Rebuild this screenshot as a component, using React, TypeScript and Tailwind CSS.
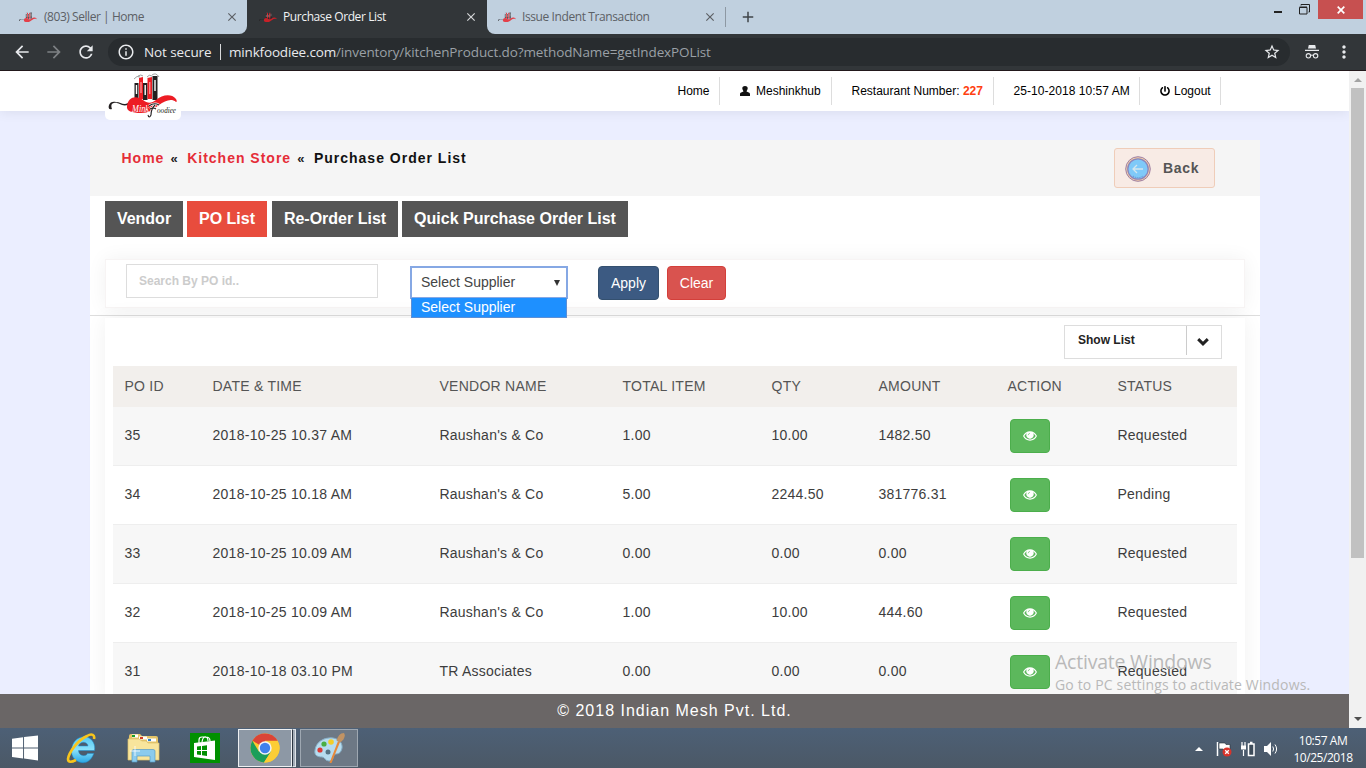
import React from 'react';
import {
  MdAdd,
  MdArrowBack,
  MdArrowForward,
  MdClose,
  MdInfoOutline,
  MdMoreVert,
  MdRefresh,
  MdStarBorder
} from 'react-icons/md';
import { FaPowerOff } from 'react-icons/fa';

const columns = ['PO ID', 'DATE & TIME', 'VENDOR NAME', 'TOTAL ITEM', 'QTY', 'AMOUNT', 'ACTION', 'STATUS'];

const orders = [
{ id: '35', date: '2018-10-25 10.37 AM', vendor: "Raushan's & Co", items: '1.00', qty: '10.00', amount: '1482.50', status: 'Requested' },
{ id: '34', date: '2018-10-25 10.18 AM', vendor: "Raushan's & Co", items: '5.00', qty: '2244.50', amount: '381776.31', status: 'Pending' },
{ id: '33', date: '2018-10-25 10.09 AM', vendor: "Raushan's & Co", items: '0.00', qty: '0.00', amount: '0.00', status: 'Requested' },
{ id: '32', date: '2018-10-25 10.09 AM', vendor: "Raushan's & Co", items: '1.00', qty: '10.00', amount: '444.60', status: 'Requested' },
{ id: '31', date: '2018-10-18 03.10 PM', vendor: 'TR Associates', items: '0.00', qty: '0.00', amount: '0.00', status: 'Requested' }];

const GRID = 'grid grid-cols-[88px_227px_183px_149px_107px_129px_110px_131px]';

function LogoArt() {
  return (
    <>
      <path d="M29.500 12h4v16h-4zM38 12h4.500v17H38zM47.500 5h5v24h-5z" fill="#231f20" />
      <path d="M34 7l4-1v22h-4zM42.500 7l4.500-1v22h-4.500z" fill="#ed1c24" />
      <path d="M31.500 14v9M40.200 14v10M50 9v11" stroke="#fff" strokeWidth="1.400" />
      <path d="M36 11v11M44.800 11v12" stroke="#fff" strokeWidth=".7" />
      <path d="M29 8q3-4 6-2M33 5q3-2 5 0M42 6q2-3 5-1M47 4q4-3 7 2" fill="none" stroke="#777" strokeWidth=".7" />
      <path d="M23 34c-7 2-9-3-14-2-3 .5-3 3-2 6-3 1-4-1-3-4 1-3 4-4 7-3 5 0 7 4 12 1z" fill="#231f20" />
      <path d="M22 35c1-9 9-11 16-6 5 4 9 3 13 0 6-5 15-7 20-1 1 2 1 3 0 3-5-4-11-1-17 3-7 5-10 8-18 8-9 0-15-2-14-7z" fill="#ed1c24" />
    </>);

}

function Logo() {
  return (
    <svg viewBox="0 0 76 49" className="w-[76px] h-[49px] overflow-visible">
      <LogoArt />
      <text x="27" y="41" fontSize="11" fontStyle="italic" fontFamily="Liberation Serif, serif" fill="#fff" textLength="17" lengthAdjust="spacingAndGlyphs">Mink</text>
      <path d="M44 35q5-4 10-1M50 34q-4 4-4 10-2 4-3 0M45 38q3-2 6 0" fill="none" stroke="#fff" strokeWidth="2.500" />
      <path d="M44 35q5-4 10-1M50 34q-4 4-4 10-2 4-3 0M45 38q3-2 6 0" fill="none" stroke="#231f20" strokeWidth="1.100" />
      <text x="52" y="42" fontSize="9" fontStyle="italic" fontFamily="Liberation Serif, serif" fill="#231f20" textLength="19" lengthAdjust="spacingAndGlyphs">oodiee</text>
    </svg>);

}

function Favicon({ className }: { className: string }) {
  return (
    <svg viewBox="3 4 70 41" className={`w-[18px] h-[11px] opacity-80 ${className}`}>
      <LogoArt />
    </svg>);

}

function EyeIcon() {
  return (
    <svg viewBox="0 0 14 10" className="w-[14px] h-[10px]">
      <path fillRule="evenodd" d="M7 .3c3 0 5.600 1.900 7 4.700-1.400 2.800-4 4.700-7 4.700S1.400 7.800 0 5C1.400 2.200 4 .3 7 .3zM3.900 2.200C2.800 2.900 1.900 3.800 1.300 5 2.500 7.100 4.600 8.500 7 8.500S11.500 7.100 12.700 5c-.6-1.200-1.500-2.100-2.600-2.800a3.600 3.600 0 1 1-6.200 0z" fill="#fff" />
      <circle cx="7" cy="4.300" r="2.900" fill="#fff" />
      <path d="M5.200 4.200A1.900 1.900 0 0 1 7 2.400" fill="none" stroke="#5cb85c" strokeWidth=".6" />
    </svg>);

}

function TitleBar() {
  return (
    <div className="h-[34px] bg-[#c0d0df] flex text-[12px] text-[#5c6065]">
      <div className="w-[247px] flex items-center bg-[#c0d0df] rounded-br-[8px] relative z-10">
        <Favicon className="ml-[19px]" />
        <span className="ml-[7px] flex-1 tracking-[-0.450px]">(803) Seller | Home</span>
        <MdClose className="mr-[8px] text-[14px]" />
      </div>
      <div className="-ml-[8px] pl-[8px] w-[256px] -mr-[8px] flex bg-[#323639] rounded-tr-[8px]">
        <div className="flex-1 flex items-center text-[#f1f3f4]">
          <Favicon className="ml-[12px]" />
          <span className="ml-[6px] flex-1 tracking-[-0.400px]">Purchase Order List</span>
          <MdClose className="mr-[17px] text-[14px] text-[#d5d7d9]" />
        </div>
      </div>
      <div className="w-[238px] flex items-center bg-[#c0d0df] rounded-bl-[8px]">
        <Favicon className="ml-[11px]" />
        <span className="ml-[6px] flex-1 tracking-[-0.400px]">Issue Indent Transaction</span>
        <MdClose className="mr-[8px] text-[14px]" />
      </div>
      <div className="w-px h-5 mt-[7px] bg-[#8d98a3]" />
      <MdAdd className="ml-[13px] mt-[8px] text-[18px] text-[#3f4449]" />
      <div className="ml-auto mr-[3px] flex h-[19px]">
        <div className="mt-[11px] mr-[17px] w-[8px] h-[2px] bg-[#222]" />
        <svg viewBox="0 0 11 11" className="w-[11px] h-[11px] mt-[4px] mr-[8px]">
          <path d="M2 1.500V.5h8.500v7.500h-1" fill="none" stroke="#222" />
          <path d="M.5 3.500h7.500v6.500h-7.500zM.5 3h7.500" fill="none" stroke="#222" />
        </svg>
        <div className="w-[45px] bg-[#c75050] flex justify-center items-center">
          <svg viewBox="0 0 8 8" className="w-[8px] h-[8px]">
            <path d="M.7.7l6.600 6.600M7.300.7l-6.600 6.600" stroke="#fff" strokeWidth="1.700" />
          </svg>
        </div>
      </div>
    </div>);

}

function AddressBar() {
  return (
    <div className="h-[37px] bg-[#323639] border-b border-[#22181b] flex items-center text-[#e8eaed]">
      <MdArrowBack className="ml-[12px] text-[20px]" />
      <MdArrowForward className="ml-[12px] text-[20px] text-[#7d8184]" />
      <MdRefresh className="ml-[12px] text-[20px]" />
      <div className="ml-[12px] w-[1182px] h-[28px] rounded-full bg-[#282c2f] flex items-center text-[13.500px]">
        <MdInfoOutline className="ml-[9px] text-[18px]" />
        <span className="ml-[9px] w-[68px] whitespace-nowrap tracking-[-0.100px]">Not secure</span>
        <span className="ml-[8px] w-px h-4 bg-[#d8dadc]" />
        <span className="ml-[8px] text-[#9aa0a6] tracking-[-0.110px]">
          <span className="text-[#e8eaed] tracking-[-0.170px]">minkfoodiee.com</span>/inventory/kitchenProduct.do?methodName=getIndexPOList
        </span>
        <MdStarBorder className="ml-auto mr-[9px] text-[18px]" />
      </div>
      <svg viewBox="0 0 14 14" className="ml-[15px] w-[14px] h-[14px]">
        <path d="M3.800 0h6.400l.8 3.600H3zM0 4.800h14v1.300H0z" fill="#e8eaed" />
        <circle cx="3.400" cy="10.800" r="2.200" fill="none" stroke="#e8eaed" strokeWidth="1.100" />
        <circle cx="10.600" cy="10.800" r="2.200" fill="none" stroke="#e8eaed" strokeWidth="1.100" />
        <path d="M5.600 10.500q1.400-1 2.800 0" fill="none" stroke="#e8eaed" />
      </svg>
      <MdMoreVert className="ml-[15px] text-[20px]" />
    </div>);

}

function SiteHeader() {
  return (
    <div className="h-[40px] bg-white shadow-[0_1px_12px_rgba(0,0,0,0.080)] flex text-[12px] leading-[14px] text-black">
      <div className="ml-[105px] h-[49px] w-[76px] bg-white rounded-[5px]">
        <Logo />
      </div>
      <div className="ml-auto mr-[128px] mt-[6px] h-[28px] flex">
        <div className="w-[53px] border-r border-[#ddd] flex items-center pl-[10.500px]">Home</div>
        <div className="w-[112px] border-r border-[#ddd] flex items-center pl-[20px]">
          <svg viewBox="0 0 10 10" className="w-[10px] h-[10px] mr-[6px]">
            <path d="M5 0c1.900 0 2.800 1.100 2.700 2.600C7.400 3.900 6.900 4.700 6.500 5.200c.2.700 3.300.8 3.500 2.700V10H0V7.900c.2-1.900 3.300-2 3.500-2.700-.4-.5-.9-1.300-1.200-2.600C2.200 1.100 3.100 0 5 0z" fill="#111" />
          </svg>
          Meshinkhub
        </div>
        <div className="w-[162px] border-r border-[#ddd] flex items-center pl-[19.500px] whitespace-pre">
          Restaurant Number: <b className="text-[#ff4010]">227</b>
        </div>
        <div className="w-[146px] border-r border-[#ddd] flex items-center pl-[19.500px] tracking-[0.050px]">25-10-2018 10:57 AM</div>
        <div className="w-[81px] border-r border-[#ddd] flex items-center pl-[20px]">
          <FaPowerOff className="text-[10px] mr-[4px]" />
          Logout
        </div>
      </div>
    </div>);

}

function Breadcrumb() {
  return (
    <div className="h-[56px] bg-[#f5f5f5] flex justify-between pl-[31.500px] pr-[45px] text-[14px] font-bold">
      <div className="mt-[9px] leading-[18px] tracking-[1px] whitespace-pre text-[#e52d38]">
        Home<span className="text-[#222] text-[13px] ml-[6px] mr-[8.500px]">«</span>Kitchen Store<span className="text-[#222] text-[13px] ml-[6px] mr-[8.500px]">«</span><span className="text-[#111]">Purchase Order List</span>
      </div>
      <button className="mt-[8px] w-[101px] h-[40px] rounded-[3px] border border-[#efcdb9] bg-[#f8ebe5] flex items-center pl-[10px] text-[#555] tracking-[0.700px]">
        <svg viewBox="0 0 26 26" className="w-[26px] h-[26px] mr-[12px] mt-[2px]">
          <circle cx="13" cy="13" r="12.300" fill="#f3cda4" stroke="#9d7fa6" strokeWidth="1" />
          <circle cx="13" cy="13" r="10.200" fill="#7fc9f8" stroke="#8a86bd" strokeWidth="1.300" />
          <path d="M18 13H8.500M12 9l-4 4 4 4" fill="none" stroke="#d3e6ee" strokeWidth="1.300" />
          <path d="M8 20q5 3.500 10 0" fill="none" stroke="#5b8fca" strokeDasharray="1 1" />
        </svg>
        Back
      </button>
    </div>);

}

function NavTabs() {
  return (
    <div className="mt-[5px] pl-[15px] flex h-[36px] text-[16px] leading-[35px] font-bold text-white text-center whitespace-nowrap">
      <div className="w-[78px] bg-[#555]">Vendor</div>
      <div className="ml-[4px] w-[80px] bg-[#e84c3d]">PO List</div>
      <div className="ml-[5px] w-[126px] bg-[#555]">Re-Order List</div>
      <div className="ml-[4px] w-[226px] bg-[#555]">Quick Purchase Order List</div>
    </div>);

}

function Filters() {
  return (
    <div className="mt-[22px] mx-[15px] h-[49px] border border-[#f7f4f4] bg-white shadow-[0_0_20px_rgba(0,0,0,0.060)] flex text-[14px]">
      <div className="ml-[20px] mt-[4px] w-[252px] h-[34px] border border-[#ddd] pl-[12px] leading-[32px] text-[12px] font-bold text-[#ccc]">
        Search By PO id..
      </div>
      <div className="relative z-20 ml-[32px] mt-[6px] w-[158px] h-[33px] border-2 border-[#86a8e4] bg-white flex items-center justify-between pl-[9px] pr-[6px] text-[#444]">
        Select Supplier
        <svg viewBox="0 0 6 6" className="w-[6px] h-[6px]"><path d="M0 0h6L3 6z" fill="#333" /></svg>
        <div className="absolute left-[-1px] top-[30px] w-[156px] h-[20px] pl-[9px] bg-[#1e90ff] border border-t-0 border-[#5c8fd6] text-white leading-[19px]">
          Select Supplier
        </div>
      </div>
      <button className="ml-[30px] mt-[6px] w-[61px] h-[34px] rounded-[4px] border border-[#34506f] bg-[#3c5a82] text-white">Apply</button>
      <button className="ml-[8px] mt-[6px] w-[59px] h-[34px] rounded-[4px] border border-[#d43f3a] bg-[#d9534f] text-white">Clear</button>
    </div>);

}

function OrdersTable() {
  return (
    <div className="text-[14px] text-[#3d3d3d] tracking-[0.230px]">
      <div className={`${GRID} h-[41px] bg-[#f2efec] text-[#555] leading-[40px] tracking-[0.250px]`}>
        {columns.map((name) => <div key={name} className="pl-[11.500px]">{name}</div>)}
      </div>
      {orders.map((order) =>
      <div key={order.id} className={`${GRID} h-[59px] border-b border-[#eee] leading-[57px] odd:bg-white even:bg-[#f7f7f7]`}>
          <div className="pl-[11.500px]">{order.id}</div>
          <div className="pl-[11.500px] tracking-[0.270px]">{order.date}</div>
          <div className="pl-[11.500px]">{order.vendor}</div>
          <div className="pl-[11.500px]">{order.items}</div>
          <div className="pl-[11.500px]">{order.qty}</div>
          <div className="pl-[11.500px]">{order.amount}</div>
          <div className="pl-[14px] pt-[12px]">
            <button className="w-[40px] h-[34px] rounded-[4px] bg-[#5cb85c] border border-[#4cae4c] flex items-center justify-center">
              <EyeIcon />
            </button>
          </div>
          <div className="pl-[11.500px]">{order.status}</div>
        </div>
      )}
    </div>);

}

function OrdersPanel() {
  return (
    <div className="mt-[2px] mx-[15px] px-[8px] pt-[7px] bg-white shadow-[0_0_20px_rgba(0,0,0,0.060)]">
      <div className="ml-auto mr-[15px] w-[158px] h-[34px] border border-[#ddd] flex text-[12px] font-bold text-[#222]">
        <div className="w-[122px] h-[29px] border-r border-[#ccc] pl-[13px] leading-[28px]">Show List</div>
        <svg viewBox="0 0 12 8" className="w-[12px] h-[8px] ml-[10px] mt-[12px]">
          <path d="M1.200 1.200L6 5.800l4.800-4.600" fill="none" stroke="#222" strokeWidth="3" />
        </svg>
      </div>
      <div className="mt-[7px]">
        <OrdersTable />
      </div>
    </div>);

}

function Scrollbar() {
  return (
    <div className="w-[17px] bg-[#f1f1f1] flex flex-col items-center">
      <svg viewBox="0 0 8 4" className="w-[8px] h-[4px] mt-[7px] shrink-0"><path d="M4 0l4 4H0z" fill="#a3a3a3" /></svg>
      <div className="mt-[6px] w-[13px] h-[470px] bg-[#c1c1c1]" />
      <svg viewBox="0 0 8 4" className="w-[8px] h-[4px] mt-auto mb-[7px] shrink-0"><path d="M0 0h8L4 4z" fill="#505050" /></svg>
    </div>);

}

function TaskbarIcons() {
  return (
    <>
      <svg viewBox="0 0 27 26" className="ml-[12px] w-[26px] h-[26px]">
        <path d="M0 3.500l11.500-1.600v10.600H0zM12.500 1.700L27 0v12.500H12.500zM0 13.500h11.500v10.300L0 22.300zM12.500 13.500H27V26l-14.500-2z" fill="#fff" />
      </svg>
      <svg viewBox="0 0 30 32" className="ml-[28px] w-[30px] h-[32px]">
        <defs>
          <linearGradient id="ie" x1="0" y1="0" x2="0" y2="1">
            <stop offset="0" stopColor="#55c8f3" />
            <stop offset=".5" stopColor="#8ae2fb" />
            <stop offset="1" stopColor="#2aa6e4" />
          </linearGradient>
        </defs>
        <path fillRule="evenodd" d="M28.500 18.500H12.500c.3 6 7.500 6.500 9 3h6.300C25 29 20 31.500 15 30.500 8 29 4 23 6 15 8 7 15 3.500 21 5c6 2 8.500 8 7.500 13.500zM12.500 14H22c-.5-5-8.500-5-9.500 0z" fill="url(#ie)" stroke="#1d8fd0" strokeWidth=".5" />
        <path d="M28 7c1-4-2-6-7-3C12 8 3 20 2 27c0 4 4 3 8 1" fill="none" stroke="#f8c51c" strokeWidth="2.600" />
      </svg>
      <svg viewBox="0 0 33 30" className="ml-[31px] w-[33px] h-[30px]">
        <path d="M2 3q0-2 2-2h9l2 2h14q2 0 2 2v22H1z" fill="#e4c468" />
        <path d="M5 3h6M12 5h8M20 7h9" stroke="#fff" strokeWidth="3" />
        <path d="M5 3h3" stroke="#189f28" strokeWidth="2" />
        <path d="M13 5h3" stroke="#d33d25" strokeWidth="2" />
        <path d="M21 7h3" stroke="#2b83d1" strokeWidth="2" />
        <path d="M1 6h11l3 2h4l2 2h11v17H1z" fill="#f8e59c" stroke="#dcc06a" strokeWidth=".7" />
        <path d="M5 29V18q0-1.500 2-1.500h19q2 0 2 1.500v11h-5v-6H10v6z" fill="#8bcbed" stroke="#579cc6" strokeWidth=".7" />
        <path d="M8 13v10M3 18h10" stroke="#fff" strokeWidth=".8" />
      </svg>
      <svg viewBox="0 0 30 30" className="ml-[30px] w-[30px] h-[30px]">
        <path d="M0 0h30v30H0z" fill="#009000" />
        <path d="M4 10l21-2.500V27L4 24z" fill="#fff" />
        <path d="M9 10V7q0-3 3-3h3q3 0 3 4M12 9q1-6 4-5 4 0 4 4" fill="none" stroke="#fff" strokeWidth="1.200" />
        <path d="M7 13.500l4-.5v4H7zM12 12.900l5-.7V17h-5zM7 18h4v4l-4-.5zM12 18h5v5l-5-.8z" fill="#009000" />
      </svg>
      <div className="ml-[18px] w-[54px] h-[38px] border border-[#eef0f2] bg-[#8d98a5] flex items-center justify-center">
        <svg viewBox="0 0 30 30" className="w-[30px] h-[30px]">
          <circle cx="15" cy="15" r="14.500" fill="#fbc82e" />
          <path d="M15 15L2.400 7.800A14.500 14.500 0 0 1 27.600 7.800H15z" fill="#db4437" />
          <path d="M2.400 7.800A14.500 14.500 0 0 0 14 29.500L21 18.500 15 15 8.800 18.600z" fill="#1b9e5a" />
          <path d="M15 8h12.700A14.500 14.500 0 0 1 14 29.500l7.100-11z" fill="#fccd35" />
          <circle cx="15" cy="15" r="6.700" fill="#f4f4f4" />
          <circle cx="15" cy="15" r="5.200" fill="#4081ec" />
        </svg>
      </div>
      <div className="w-[4px] h-[38px] border border-l-[#2b3541] border-[#dfe3e8] bg-[#a5aeb8]" />
      <div className="ml-[4px] w-[58px] h-[38px] border border-[#9ea7b1] bg-[#6d7885] flex items-center justify-center">
        <svg viewBox="0 0 32 32" className="w-[32px] h-[32px]">
          <path d="M2 18C3 10 11 5 20 6c8 1 11 8 8 13-2 4-5 2-7 4-2 3 0 6-5 6-4 0-4-4-7-4-5 0-8-2-7-7z" fill="#b6dcef" stroke="#86aec6" />
          <circle cx="7" cy="18" r="2.600" fill="#dc3a35" />
          <circle cx="11" cy="12" r="2.600" fill="#4aae43" />
          <circle cx="18" cy="10" r="2.800" fill="#f2ce28" />
          <circle cx="15" cy="20" r="2.500" fill="#557384" />
          <path d="M16.500 31L25 9l2 1-8.500 21z" fill="#e8893a" />
          <path d="M23.500 8.500C25 4 27 1 31 1c2 3 0 7-4 9.500z" fill="#c19364" />
        </svg>
      </div>
    </>);

}

function Taskbar() {
  return (
    <div className="h-[40px] bg-linear-to-b from-[#4d6076] to-[#4b5866] flex items-center text-white">
      <TaskbarIcons />
      <svg viewBox="0 0 8 4" className="ml-auto mt-[2px] w-[8px] h-[4px]"><path d="M4 0l4 4H0z" fill="#fff" /></svg>
      <svg viewBox="0 0 16 16" className="ml-[13px] mt-[2px] w-[16px] h-[16px]">
        <path d="M1.500 1v14" stroke="#fff" strokeWidth="1.500" />
        <path d="M3 2h6l1 1.500h4V9H8L7 8H3z" fill="#fff" stroke="#222b33" strokeWidth=".6" />
        <circle cx="11" cy="11" r="4.500" fill="#d9342b" />
        <path d="M9.200 9.200l3.600 3.600M12.800 9.200l-3.600 3.600" stroke="#fff" strokeWidth="1.300" />
      </svg>
      <svg viewBox="0 0 16 16" className="ml-[8px] mt-[2px] w-[16px] h-[16px]">
        <path d="M2 1v4M5 1v4M3.500 9v6" stroke="#fff" strokeWidth="1.200" />
        <path d="M1 4.500h5v4H1z" fill="#fff" />
        <path d="M8.500 3h5.500v11.500H8.500zM10 1.500h2.500" fill="#3d4b59" stroke="#fff" strokeWidth="1.500" />
      </svg>
      <svg viewBox="0 0 16 16" className="ml-[7px] mt-[2px] w-[16px] h-[16px]">
        <path d="M1 5h3l4-4v14l-4-4H1z" fill="#fff" />
        <path d="M9.800 5.500q1.600 2.500 0 5M12 3.500q3.200 4.500 0 9" fill="none" stroke="#fff" />
      </svg>
      <div className="ml-[9px] w-[70px] mr-[8px] mt-[2px] text-center text-[12px] leading-[17px] tracking-[-0.450px]">
        <div>10:57 AM</div>
        <div>10/25/2018</div>
      </div>
    </div>);

}

export default function App() {
  return (
    <div className="relative w-[1366px] h-[768px] overflow-hidden flex flex-col font-['Open_Sans','Noto_Sans',sans-serif]">
      <TitleBar />
      <AddressBar />
      <div className="h-[657px] flex">
        <div className="w-[1349px] flex flex-col bg-[#ebeeff] font-['Liberation_Sans',Arial,sans-serif]">
          <div className="h-[623px] overflow-hidden">
            <SiteHeader />
            <div className="mt-[29px] ml-[90px] w-[1170px] h-[560px] bg-white">
              <Breadcrumb />
              <NavTabs />
              <Filters />
              <div className="mt-[7px] h-px bg-[#ddd]" />
              <OrdersPanel />
            </div>
          </div>
          <div className="h-[34px] bg-[#6a6666] text-white text-[16px] leading-[33px] text-center tracking-[1px]">
            © 2018 Indian Mesh Pvt. Ltd.
          </div>
        </div>
        <Scrollbar />
      </div>
      <Taskbar />
      {/* system watermark floating over the page */}
      <div className="absolute left-[1055px] top-[650px] text-[#b9b9b9] whitespace-nowrap">
        <div className="text-[19.500px] leading-[24px] tracking-[-0.220px]">Activate Windows</div>
        <div className="text-[14px] leading-[21px] tracking-[0.160px]">Go to PC settings to activate Windows.</div>
      </div>
    </div>);

}
